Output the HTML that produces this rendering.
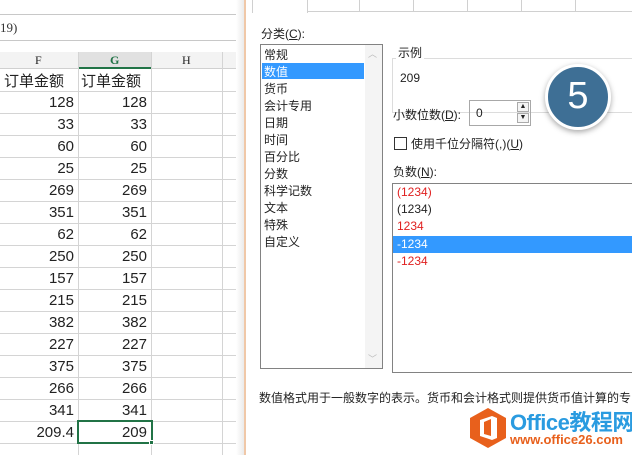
<!DOCTYPE html><html><head><meta charset="utf-8"><style>
*{margin:0;padding:0;box-sizing:border-box}
body{width:632px;height:455px;overflow:hidden;background:#fff;position:relative;font-family:"Liberation Sans","Noto Sans CJK SC",sans-serif;font-size:13px;color:#222}
.a{position:absolute;white-space:nowrap}
.vl{position:absolute;width:1px;background:#d4d4d4}
.hl{position:absolute;height:1px;background:#d4d4d4;left:0;width:240px}
.num{position:absolute;font-size:15px;text-align:right;width:70px}
.li{position:absolute;left:264px;font-size:12px}
</style></head><body>
<!-- spreadsheet -->
<div class="hl" style="top:14px;background:#c8c8c8"></div>
<div class="a" style="left:0;top:20px;font-size:13px;font-family:'Liberation Serif',serif;color:#333">19)</div>
<div class="hl" style="top:40px;background:#c8c8c8"></div>
<div class="a" style="left:0;top:52px;width:240px;height:17px;background:#f3f3f3;border-bottom:1px solid #d0d0d0"></div>
<div class="a" style="left:78px;top:52px;width:73px;height:17px;background:#e1e1e1;border-bottom:2px solid #217346"></div>
<div class="a" style="left:35px;top:53px;font-family:'Liberation Serif',serif;font-size:12px">F</div>
<div class="a" style="left:110px;top:53px;font-family:'Liberation Serif',serif;font-size:12px;color:#217346;font-weight:bold">G</div>
<div class="a" style="left:182px;top:53px;font-family:'Liberation Serif',serif;font-size:12px">H</div>
<div class="vl" style="left:78px;top:52px;height:403px"></div>
<div class="vl" style="left:151px;top:52px;height:403px"></div>
<div class="vl" style="left:222px;top:52px;height:403px"></div>
<div class="a" style="left:4px;top:70px;font-size:15px">订单金额</div>
<div class="a" style="left:81px;top:70px;font-size:15px">订单金额</div>
<div id="rows"></div>
<div class="a" style="left:77px;top:420px;width:76px;height:24px;border:2px solid #217346"></div>
<div class="a" style="left:149px;top:440px;width:5px;height:5px;background:#217346;border:1px solid #fff"></div>
<!-- dialog -->
<div class="a" style="left:236px;top:0;width:10px;height:455px;background:linear-gradient(90deg,#fff,#e6e6e6)"></div>
<div class="a" style="left:244px;top:0;width:2px;height:455px;background:#f0c8a8"></div>
<div class="a" style="left:246px;top:0;width:386px;height:455px;background:#fff"></div>
<div class="a" style="left:252px;top:0;width:380px;height:12px;border-bottom:1px solid #d0d0d0"></div>
<div class="a" style="left:252px;top:0;width:56px;height:13px;background:#fff;border:1px solid #d0d0d0;border-top:none;border-bottom:none"></div>
<div class="a" style="left:359px;top:0;width:1px;height:12px;background:#d0d0d0"></div>
<div class="a" style="left:413px;top:0;width:1px;height:12px;background:#d0d0d0"></div>
<div class="a" style="left:467px;top:0;width:1px;height:12px;background:#d0d0d0"></div>
<div class="a" style="left:521px;top:0;width:1px;height:12px;background:#d0d0d0"></div>
<div class="a" style="left:575px;top:0;width:1px;height:12px;background:#d0d0d0"></div>
<div class="a" style="left:261px;top:25px;font-size:12px">分类(<u>C</u>):</div>
<div class="a" style="left:260px;top:44px;width:123px;height:325px;border:1px solid #828282"></div>
<div class="a" style="left:365px;top:45px;width:17px;height:323px;background:#f4f4f4"></div>
<div class="a" style="left:368px;top:47px;font-size:9px;color:#bbb">︿</div>
<div class="a" style="left:368px;top:352px;font-size:9px;color:#bbb">﹀</div>
<div class="a" style="left:262px;top:63px;width:102px;height:16px;background:#3399ff"></div>
<div class="li" style="top:46px">常规</div>
<div class="li" style="top:63px;color:#fff">数值</div>
<div class="li" style="top:80px">货币</div>
<div class="li" style="top:97px">会计专用</div>
<div class="li" style="top:114px">日期</div>
<div class="li" style="top:131px">时间</div>
<div class="li" style="top:148px">百分比</div>
<div class="li" style="top:165px">分数</div>
<div class="li" style="top:182px">科学记数</div>
<div class="li" style="top:199px">文本</div>
<div class="li" style="top:216px">特殊</div>
<div class="li" style="top:233px">自定义</div>
<div class="a" style="left:392px;top:58px;width:245px;height:55px;border:1px solid #dcdcdc"></div>
<div class="a" style="left:396px;top:44px;font-size:12px;background:#fff;padding:0 2px">示例</div>
<div class="a" style="left:400px;top:71px;font-size:12px">209</div>
<div class="a" style="left:393px;top:106px;font-size:12px">小数位数(<u>D</u>):</div>
<div class="a" style="left:469px;top:100px;width:62px;height:26px;border:1px solid #a8a8a8"></div>
<div class="a" style="left:476px;top:106px;font-size:12px">0</div>
<div class="a" style="left:517px;top:102px;width:12px;height:10px;border:1px solid #aaa;background:#f4f4f4;font-size:7px;text-align:center;line-height:8px">▲</div>
<div class="a" style="left:517px;top:113px;width:12px;height:10px;border:1px solid #aaa;background:#f4f4f4;font-size:7px;text-align:center;line-height:8px">▼</div>
<div class="a" style="left:394px;top:137px;width:13px;height:13px;border:1px solid #333"></div>
<div class="a" style="left:411px;top:135px;font-size:12px">使用千位分隔符(,)(<u>U</u>)</div>
<div class="a" style="left:393px;top:163px;font-size:12px">负数(<u>N</u>):</div>
<div class="a" style="left:392px;top:183px;width:245px;height:190px;border:1px solid #828282"></div>
<div class="a" style="left:393px;top:236px;width:239px;height:17px;background:#3399ff"></div>
<div class="a" style="left:397px;top:185px;font-size:12px;color:#e02020">(1234)</div>
<div class="a" style="left:397px;top:202px;font-size:12px">(1234)</div>
<div class="a" style="left:397px;top:219px;font-size:12px;color:#e02020">1234</div>
<div class="a" style="left:397px;top:237px;font-size:12px;color:#fff">-1234</div>
<div class="a" style="left:397px;top:254px;font-size:12px;color:#e02020">-1234</div>
<div class="a" style="left:259px;top:389px;font-size:12px">数值格式用于一般数字的表示。货币和会计格式则提供货币值计算的专</div>
<div class="a" style="left:545px;top:64px;width:66px;height:66px;border-radius:50%;background:#3e6f95;border:3px solid #fff;box-shadow:0 2px 6px rgba(0,0,0,.35);color:#fff;font-size:38px;text-align:center;line-height:58px">5</div>
<!-- logo -->
<svg class="a" style="left:468px;top:407px" width="40" height="42" viewBox="0 0 40 42"><polygon points="20,1 38,11 38,31 20,41 2,31 2,11" fill="#e8601c"/><path d="M12,13 L24,9 L29,11 L29,31 L24,33 L12,29 Z M16,15 L16,27 L23,29 L23,12 Z" fill="#fff" fill-rule="evenodd"/></svg>
<div class="a" style="left:510px;top:405px;font-size:22px;font-weight:bold;color:#2a9be0;letter-spacing:-0.5px">Office教程网</div>
<div class="a" style="left:510px;top:432px;font-size:13px;font-weight:bold;color:#e8601c">www.office26.com</div>
<script>
var v=[128,33,60,25,269,351,62,250,157,215,382,227,375,266,341];
var h='';
for(var i=0;i<16;i++){var t=91+i*22;
h+='<div class="hl" style="top:'+t+'px"></div>';
var f=i<15?v[i]:'209.4',g=i<15?v[i]:'209';
h+='<div class="num" style="left:4px;top:'+(t+3)+'px">'+f+'</div><div class="num" style="left:77px;top:'+(t+3)+'px">'+g+'</div>';}
h+='<div class="hl" style="top:443px"></div>';
document.getElementById('rows').innerHTML=h;
</script>
</body></html>
